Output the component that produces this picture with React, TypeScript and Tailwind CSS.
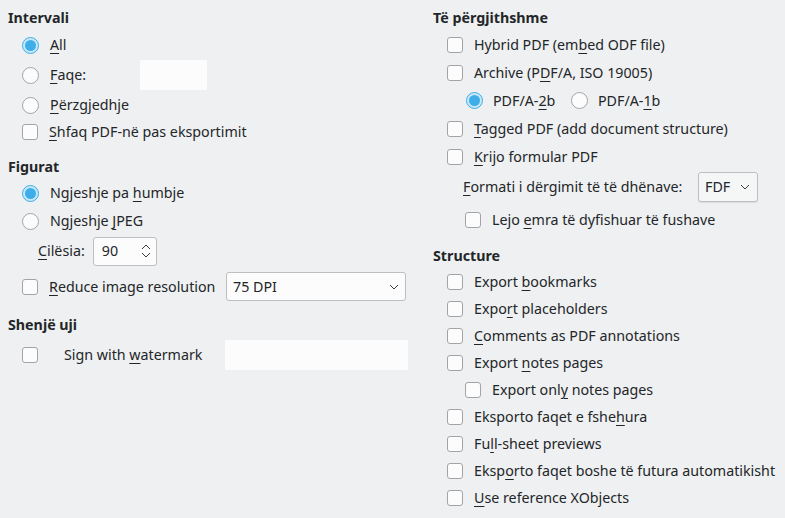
import { ReactNode } from "react";

const Mn = ({ children }: { children: ReactNode }) => (
  <span className="underline underline-offset-[3px] decoration-1">{children}</span>
);

const Box = () => (
  <span className="w-4 h-4 shrink-0 rounded-[3px] border border-[#a2a4a7] bg-[#fcfcfc]" />
);

const Radio = ({ checked }: { checked?: boolean }) =>
  checked ? (
    <span className="w-[17px] h-[17px] shrink-0 rounded-full border border-[#3daee9] bg-[#c9e7f7] flex items-center justify-center">
      <span className="w-[11px] h-[11px] rounded-full bg-[#3daee9]" />
    </span>
  ) : (
    <span className="w-[17px] h-[17px] shrink-0 rounded-full border border-[#a2a4a7] bg-[#fcfcfc]" />
  );

const Heading = ({ children, className = "" }: { children: ReactNode; className?: string }) => (
  <div className={`h-6 flex items-center font-bold ${className}`}>{children}</div>
);

interface RowProps {
  children: ReactNode;
  radio?: boolean;
  checked?: boolean;
  h: string;
  className?: string;
}

const Row = ({ children, radio, checked, h, className = "" }: RowProps) => (
  <div className={`flex items-center gap-[11px] ${h} ${className}`}>
    {radio ? <Radio checked={checked} /> : <Box />}
    <span>{children}</span>
  </div>
);

const Chevron = () => (
  <svg width="10" height="6" viewBox="0 0 10 6" fill="none" stroke="#3b3e41" strokeWidth="1">
    <path d="M1 1l4 4 4-4" />
  </svg>
);

export default function App() {
  return (
    <div
      className="w-[785px] h-[518px] bg-[#eff0f1] text-[#232629] text-[14.25px] grid grid-cols-[420px_1fr] overflow-hidden"
      style={{ fontFamily: '"Noto Sans", "DejaVu Sans", sans-serif' }}
    >
      {/* left column */}
      <div className="flex flex-col pl-2">
        <Heading className="mt-[6px]">Intervali</Heading>
        <div className="pl-[14px] flex flex-col">
          <Row radio checked h="h-[30px]">
            <Mn>A</Mn>ll
          </Row>
          <div className="flex items-center h-[30px]">
            <div className="flex items-center gap-[11px] w-[118px]">
              <Radio />
              <span>
                <Mn>F</Mn>aqe:
              </span>
            </div>
            <div className="w-[67px] h-[30px] bg-[#fcfcfc]" />
          </div>
          <Row radio h="h-[30px]">
            <Mn>P</Mn>ërzgjedhje
          </Row>
          <Row h="h-[24px]">
            <Mn>S</Mn>hfaq PDF-në pas eksportimit
          </Row>
        </div>

        <Heading className="mt-[11px]">Figurat</Heading>
        <div className="pl-[14px] flex flex-col">
          <Row radio checked h="h-[28px]">
            Ngjeshje pa <Mn>h</Mn>umbje
          </Row>
          <Row radio h="h-[28px]">
            Ngjeshje <Mn>J</Mn>PEG
          </Row>
          <div className="flex items-center h-[32px] pl-4 gap-2">
            <span>
              <Mn>C</Mn>ilësia:
            </span>
            <div className="w-[64px] h-[29px] bg-[#fcfcfc] border border-[#bcbec0] rounded-[3px] flex items-center justify-between pl-2 pr-[5px]">
              <span>90</span>
              <svg width="10" height="16" viewBox="0 0 10 16" fill="none" stroke="#3b3e41" strokeWidth="1">
                <path d="M1 6l4-4 4 4M1 10l4 4 4-4" />
              </svg>
            </div>
          </div>
          <div className="flex items-center h-[31px] mt-1">
            <div className="flex items-center gap-[11px] w-[204px]">
              <Box />
              <span>
                <Mn>R</Mn>educe image resolution
              </span>
            </div>
            <div className="w-[180px] h-[29px] bg-[#fcfcfc] border border-[#bcbec0] rounded-[3px] flex items-center justify-between pl-[6px] pr-[6px]">
              <span>75 DPI</span>
              <Chevron />
            </div>
          </div>
        </div>

        <Heading className="mt-[11px]">Shenjë uji</Heading>
        <div className="pl-[14px] flex items-center h-[30px] mt-[3px]">
          <Box />
          <span className="ml-[26px] w-[161px]">
            Sign with <Mn>w</Mn>atermark
          </span>
          <div className="w-[183px] h-[30px] bg-[#fcfcfc]" />
        </div>
      </div>

      {/* right column */}
      <div className="flex flex-col pl-[13px]">
        <Heading className="mt-[6px]">Të përgjithshme</Heading>
        <div className="pl-[14px] flex flex-col">
          <Row h="h-[28px]" className="mt-px">
            Hybrid PDF (em<Mn>b</Mn>ed ODF file)
          </Row>
          <Row h="h-[27px]">
            Archive (P<Mn>D</Mn>F/A, ISO 19005)
          </Row>
          <div className="flex items-center h-[29px] pl-[19px]">
            <div className="flex items-center gap-[10px] w-[105px]">
              <Radio checked />
              <span>
                PDF/A-<Mn>2</Mn>b
              </span>
            </div>
            <div className="flex items-center gap-[10px]">
              <Radio />
              <span>
                PDF/A-<Mn>1</Mn>b
              </span>
            </div>
          </div>
          <Row h="h-[28px]">
            <Mn>T</Mn>agged PDF (add document structure)
          </Row>
          <Row h="h-[27px]">
            <Mn>K</Mn>rijo formular PDF
          </Row>
          <div className="flex items-center h-[32px] mt-px pl-4">
            <span className="w-[235px]">
              <Mn>F</Mn>ormati i dërgimit të të dhënave:
            </span>
            <div className="w-[60px] h-[30px] bg-[#f5f6f6] border border-[#bcbec0] rounded-[3px] flex items-center justify-between pl-[6px] pr-[7px] shadow-[0_1px_1px_rgba(0,0,0,0.08)]">
              <span>FDF</span>
              <Chevron />
            </div>
          </div>
          <Row h="h-[34px]" className="pl-[18px]">
            Lejo <Mn>e</Mn>mra të dyfishuar të fushave
          </Row>
        </div>

        <Heading className="mt-[6px] h-[25px]">Structure</Heading>
        <div className="pl-[14px] flex flex-col">
          <Row h="h-[27px]">
            Export <Mn>b</Mn>ookmarks
          </Row>
          <Row h="h-[27px]">
            Expo<Mn>r</Mn>t placeholders
          </Row>
          <Row h="h-[27px]">
            <Mn>C</Mn>omments as PDF annotations
          </Row>
          <Row h="h-[27px]">
            Export <Mn>n</Mn>otes pages
          </Row>
          <Row h="h-[27px]" className="pl-[18px]">
            Export onl<Mn>y</Mn> notes pages
          </Row>
          <Row h="h-[27px]">
            Eksporto faqet e fshe<Mn>h</Mn>ura
          </Row>
          <Row h="h-[27px]">
            Fu<Mn>l</Mn>l-sheet previews
          </Row>
          <Row h="h-[27px]">
            Eksp<Mn>o</Mn>rto faqet boshe të futura automatikisht
          </Row>
          <Row h="h-[27px]">
            <Mn>U</Mn>se reference XObjects
          </Row>
        </div>
      </div>
    </div>
  );
}
